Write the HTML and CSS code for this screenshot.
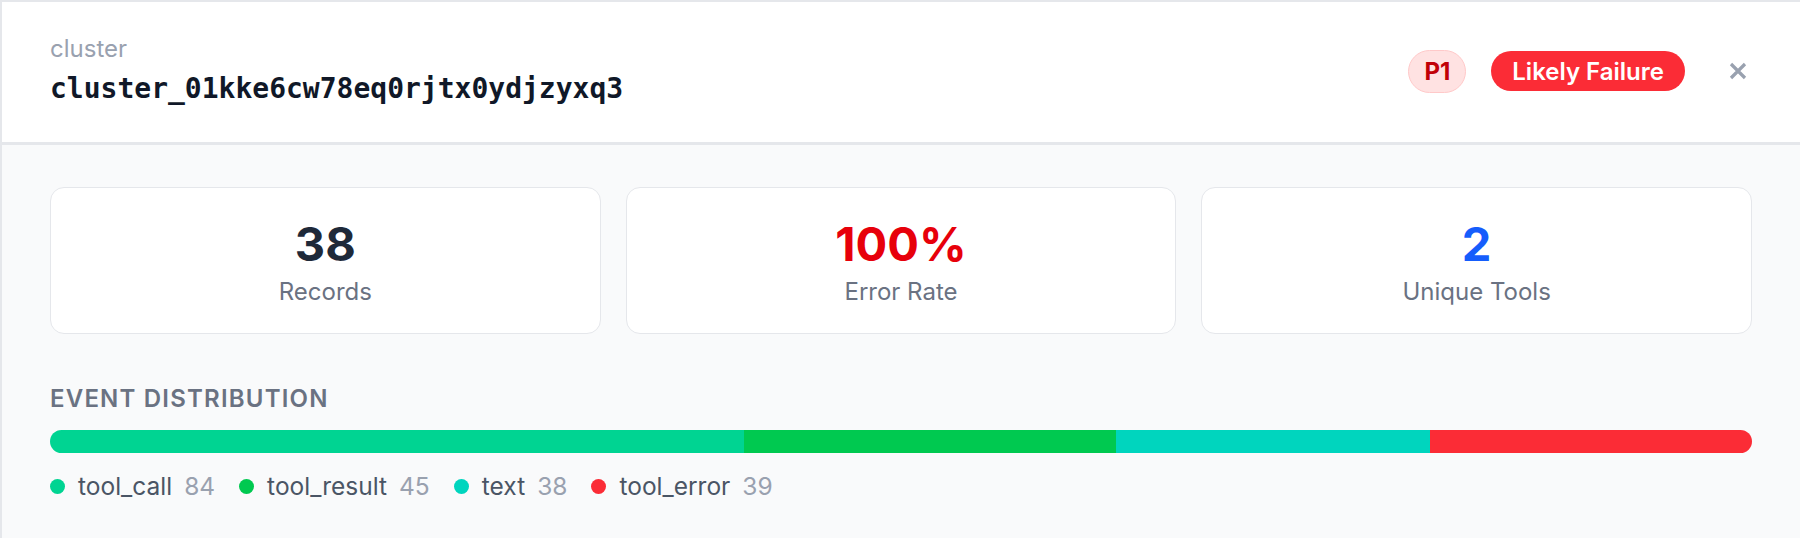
FILE: index.html
```html
<!DOCTYPE html>
<html>
<head>
    <meta charset="utf-8">
    <title>cluster</title>
    <link rel="stylesheet" href="styles.css">
</head>
<body>
<div class="panel">
    <!-- header -->
    <div class="head">
        <div class="head-title">
            <div class="head-label">cluster</div>
            <div class="head-id">cluster_01kke6cw78eq0rjtx0ydjzyxq3</div>
        </div>
        <div class="head-actions">
            <span class="badge badge-p">P1</span>
            <span class="badge badge-fail">Likely Failure</span>
            <button class="close" type="button">
                <svg width="20" height="20" viewBox="0 0 20 20">
                    <path d="M3 3L17 17M17 3L3 17" stroke="#99a1af" stroke-width="3.2" fill="none"/>
                </svg>
            </button>
        </div>
    </div>

    <!-- body -->
    <div class="content">
        <div class="stats">
            <div class="stat">
                <div class="stat-num">38</div>
                <div class="stat-label">Records</div>
            </div>
            <div class="stat">
                <div class="stat-num red">100%</div>
                <div class="stat-label">Error Rate</div>
            </div>
            <div class="stat">
                <div class="stat-num blue">2</div>
                <div class="stat-label">Unique Tools</div>
            </div>
        </div>

        <div class="dist">
            <div class="dist-title">Event Distribution</div>
            <div class="bar">
                <span class="seg c-call" style="flex:84"></span>
                <span class="seg c-result" style="flex:45"></span>
                <span class="seg c-text" style="flex:38"></span>
                <span class="seg c-error" style="flex:39"></span>
            </div>
            <div class="legend">
                <span class="item"><i class="dot c-call"></i>tool_call<em>84</em></span>
                <span class="item"><i class="dot c-result"></i>tool_result<em>45</em></span>
                <span class="item"><i class="dot c-text"></i>text<em>38</em></span>
                <span class="item"><i class="dot c-error"></i>tool_error<em>39</em></span>
            </div>
        </div>
    </div>
</div>
</body>
</html>
```
FILE: styles.css
```css
*{ margin:0; padding:0; box-sizing:border-box;}
body{
    background:#fff;
    font-family:Inter, "Noto Sans", sans-serif;
    overflow:hidden;
}
.panel{
    border-top:2px solid #e5e7eb;
    border-left:2px solid #e5e7eb;
    background:#f9fafb;
    min-height:538px;
}
.head{
    display:flex;
    align-items:center;
    justify-content:space-between;
    background:#fff;
    padding:32px 52px 34px 48px;
    border-bottom:3px solid #e5e7eb;
}
.head-label{
    font-size:24px;
    line-height:30px;
    color:#99a1af;
}
.head-id{
    margin-top:5px;
    font-family:"DejaVu Sans Mono", "Liberation Mono", monospace;
    font-weight:bold;
    font-size:28px;
    line-height:39px;
    color:#101828;
}
.head-actions{
    display:flex;
    align-items:center;
    gap:25px;
}
.badge{
    display:inline-flex;
    align-items:center;
    height:40px;
    border-radius:999px;
    font-size:24px;
    font-weight:600;
}
.badge-p{
    height:43px;
    padding:0 15px;
    background:#ffe2e2;
    border:1.5px solid #ffc9c9;
    color:#c10007;
    font-weight:700;
}
.badge-fail{
    padding:0 21px;
    background:#fb2c36;
    color:#fff;
}
.close{
    margin-left:18px;
    border:0;
    background:none;
    display:flex;
}
.content{
    padding:42px 48px 0 48px;
}
.stats{
    display:grid;
    grid-template-columns:repeat(3,1fr);
    gap:25px;
}
.stat{
    background:#fff;
    border:1.5px solid #e5e7eb;
    border-radius:14px;
    padding:29.5px 0 25.5px;
    text-align:center;
}
.stat-num{
    font-size:47px;
    line-height:52px;
    font-weight:700;
    color:#1e2939;
}
.stat-num.red{ color:#e7000b;}
.stat-num.blue{ color:#155dfc;}
.stat-label{
    margin-top:6px;
    font-size:24px;
    line-height:32px;
    color:#6a7282;
}
.dist{
    margin-top:49px;
}
.dist-title{
    font-size:24px;
    line-height:32px;
    font-weight:600;
    letter-spacing:0.05em;
    text-transform:uppercase;
    color:#6a7282;
}
.bar{
    display:flex;
    height:23px;
    margin-top:15px;
    border-radius:999px;
    overflow:hidden;
}
.seg{ display:block; height:100%;}
.c-call{ background:#00d492;}
.c-result{ background:#00c950;}
.c-text{ background:#00d5be;}
.c-error{ background:#fb2c36;}
.legend{
    display:flex;
    gap:24px;
    margin-top:17px;
    font-size:24.5px;
    line-height:32px;
    color:#4a5565;
}
.item{
    display:flex;
    align-items:center;
}
.dot{
    width:15px;
    height:15px;
    border-radius:50%;
    margin-right:13px;
}
.item em{
    font-style:normal;
    color:#99a1af;
    margin-left:12px;
}
```
